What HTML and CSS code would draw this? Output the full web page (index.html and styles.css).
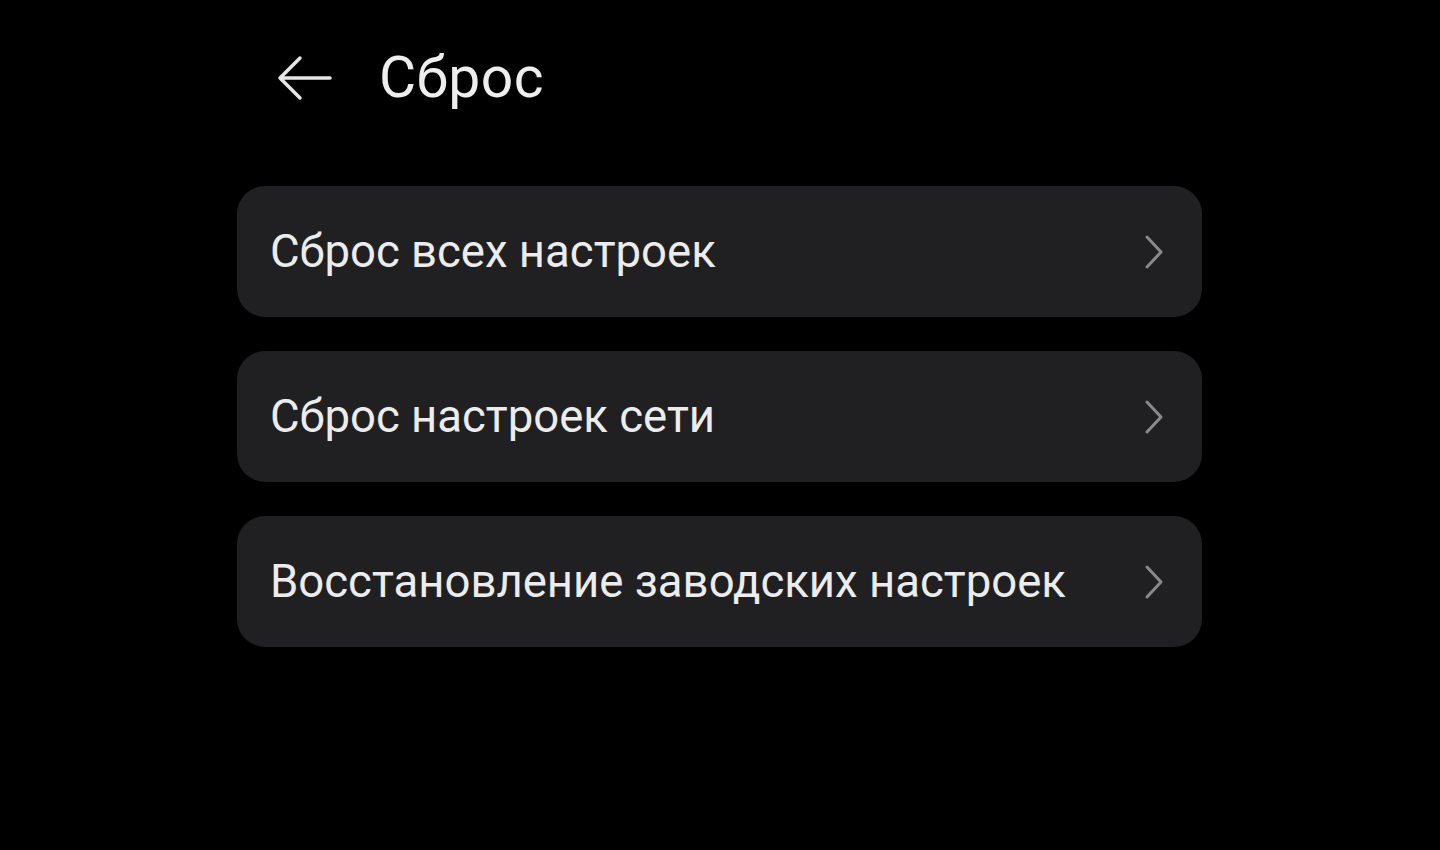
FILE: index.html
```html
<!DOCTYPE html>
<html lang="ru">
<head>
<meta charset="utf-8">
<link rel="stylesheet" href="styles.css">
</head>
<body>
<div class="page">
  <header class="header">
    <svg class="back" viewBox="0 0 56 48" width="56" height="48">
      <path d="M54 24 H4 M24 4 L4 24 L24 44" fill="none" stroke="#e6e6e6" stroke-width="3.5" stroke-linecap="round" stroke-linejoin="round"/>
    </svg>
    <h1 class="title">Сброс</h1>
  </header>
  <div class="list">
    <div class="item"><span class="label">Сброс всех настроек</span>
      <svg class="chev" viewBox="0 0 20 36" width="20" height="36"><path d="M3 3 L17 18 L3 33" fill="none" stroke="#8a8a8c" stroke-width="3" stroke-linecap="round" stroke-linejoin="round"/></svg></div>
    <div class="item"><span class="label">Сброс настроек сети</span>
      <svg class="chev" viewBox="0 0 20 36" width="20" height="36"><path d="M3 3 L17 18 L3 33" fill="none" stroke="#8a8a8c" stroke-width="3" stroke-linecap="round" stroke-linejoin="round"/></svg></div>
    <div class="item"><span class="label">Восстановление заводских настроек</span>
      <svg class="chev" viewBox="0 0 20 36" width="20" height="36"><path d="M3 3 L17 18 L3 33" fill="none" stroke="#8a8a8c" stroke-width="3" stroke-linecap="round" stroke-linejoin="round"/></svg></div>
  </div>
</div>
</body>
</html>
```
FILE: styles.css
```css
html, body { margin: 0; padding: 0; background: #000; }
body { width: 1440px; height: 850px; overflow: hidden; font-family: Roboto, "Open Sans", sans-serif; color: #ececec; }
.page { padding: 0 238px 0 237px; }
.header { display: flex; align-items: center; height: 155px; padding-left: 39px; }
.title { margin: 0 0 0 47px; font-size: 57px; font-weight: 400; color: #eeeeee; letter-spacing: 0.5px; }
.list { display: flex; flex-direction: column; gap: 34px; margin-top: 31px; }
.item { height: 131px; background: #202022; border-radius: 28px; display: flex; align-items: center; justify-content: space-between; padding: 0 38px 0 33px; }
.label { font-size: 45.5px; color: #ececec; }
.chev { display: block; }
```
